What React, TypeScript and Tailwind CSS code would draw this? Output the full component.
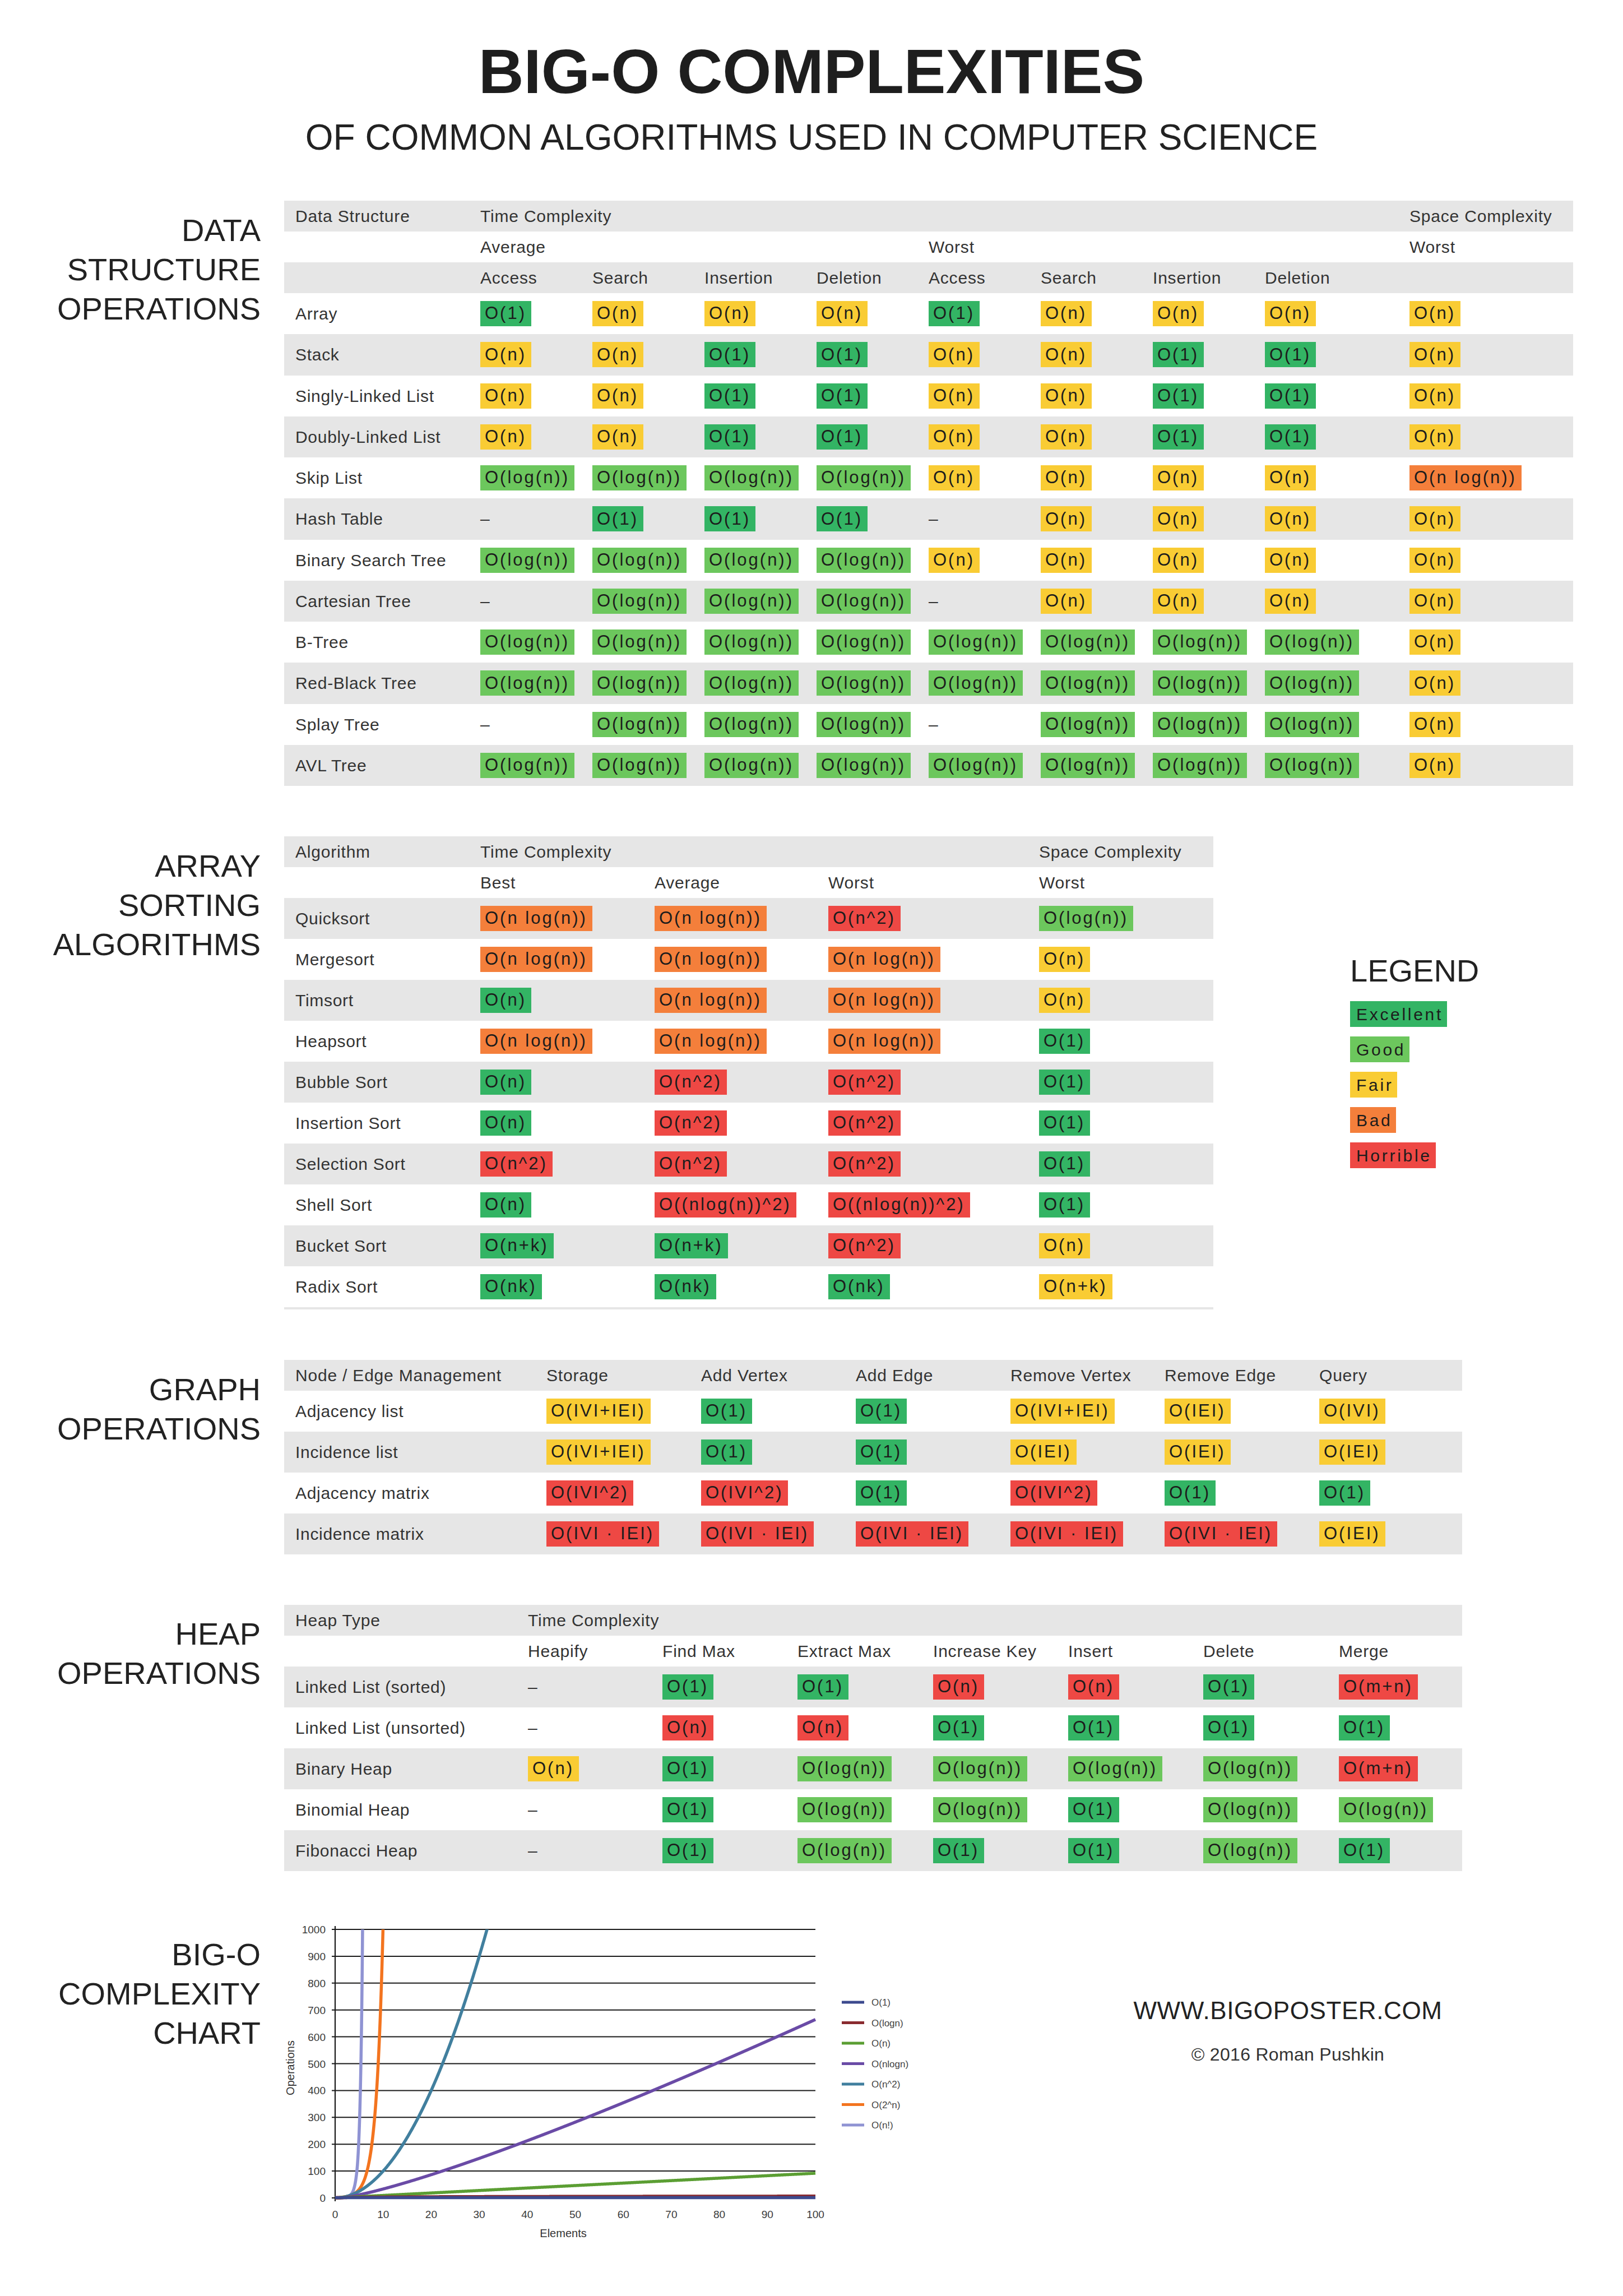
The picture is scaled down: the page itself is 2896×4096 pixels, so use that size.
import React from 'react';

type Level = 'E' | 'G' | 'F' | 'B' | 'H';
type Cell = [string, Level] | null;

const BG: Record<Level, string> = {
  E: 'bg-[#33b464]',
  G: 'bg-[#6cc75d]',
  F: 'bg-[#f9cc34]',
  B: 'bg-[#f47f3b]',
  H: 'bg-[#ee4844]',
};

const o1: Cell = ['O(1)', 'E'];
const on: Cell = ['O(n)', 'F'];
const onE: Cell = ['O(n)', 'E'];
const onH: Cell = ['O(n)', 'H'];
const lg: Cell = ['O(log(n))', 'G'];
const nl: Cell = ['O(n log(n))', 'B'];
const n2: Cell = ['O(n^2)', 'H'];
const mn: Cell = ['O(m+n)', 'H'];

const dsRows: [string, Cell[]][] = [
  ['Array', [o1, on, on, on, o1, on, on, on, on]],
  ['Stack', [on, on, o1, o1, on, on, o1, o1, on]],
  ['Singly-Linked List', [on, on, o1, o1, on, on, o1, o1, on]],
  ['Doubly-Linked List', [on, on, o1, o1, on, on, o1, o1, on]],
  ['Skip List', [lg, lg, lg, lg, on, on, on, on, nl]],
  ['Hash Table', [null, o1, o1, o1, null, on, on, on, on]],
  ['Binary Search Tree', [lg, lg, lg, lg, on, on, on, on, on]],
  ['Cartesian Tree', [null, lg, lg, lg, null, on, on, on, on]],
  ['B-Tree', [lg, lg, lg, lg, lg, lg, lg, lg, on]],
  ['Red-Black Tree', [lg, lg, lg, lg, lg, lg, lg, lg, on]],
  ['Splay Tree', [null, lg, lg, lg, null, lg, lg, lg, on]],
  ['AVL Tree', [lg, lg, lg, lg, lg, lg, lg, lg, on]],
];

const shell: Cell = ['O((nlog(n))^2)', 'H'];
const nk: Cell = ['O(nk)', 'E'];
const sortRows: [string, Cell[]][] = [
  ['Quicksort', [nl, nl, n2, lg]],
  ['Mergesort', [nl, nl, nl, on]],
  ['Timsort', [onE, nl, nl, on]],
  ['Heapsort', [nl, nl, nl, o1]],
  ['Bubble Sort', [onE, n2, n2, o1]],
  ['Insertion Sort', [onE, n2, n2, o1]],
  ['Selection Sort', [n2, n2, n2, o1]],
  ['Shell Sort', [onE, shell, shell, o1]],
  ['Bucket Sort', [['O(n+k)', 'E'], ['O(n+k)', 'E'], n2, on]],
  ['Radix Sort', [nk, nk, nk, ['O(n+k)', 'F']]],
];

const vpe: Cell = ['O(IVI+IEI)', 'F'];
const oe: Cell = ['O(IEI)', 'F'];
const ov: Cell = ['O(IVI)', 'F'];
const v2: Cell = ['O(IVI^2)', 'H'];
const ve: Cell = ['O(IVI · IEI)', 'H'];
const graphRows: [string, Cell[]][] = [
  ['Adjacency list', [vpe, o1, o1, vpe, oe, ov]],
  ['Incidence list', [vpe, o1, o1, oe, oe, oe]],
  ['Adjacency matrix', [v2, v2, o1, v2, o1, o1]],
  ['Incidence matrix', [ve, ve, ve, ve, ve, oe]],
];

const heapRows: [string, Cell[]][] = [
  ['Linked List (sorted)', [null, o1, o1, onH, onH, o1, mn]],
  ['Linked List (unsorted)', [null, onH, onH, o1, o1, o1, o1]],
  ['Binary Heap', [on, o1, lg, lg, lg, lg, mn]],
  ['Binomial Heap', [null, o1, lg, lg, o1, lg, lg]],
  ['Fibonacci Heap', [null, o1, lg, o1, o1, lg, o1]],
];

const DS_COLS = 'grid-cols-[350px_200px_200px_200px_200px_200px_200px_200px_258px_292px]';
const SORT_COLS = 'grid-cols-[350px_311px_310px_376px_311px]';
const GRAPH_COLS = 'grid-cols-[468px_276px_276px_276px_275px_276px_255px]';
const HEAP_COLS = 'grid-cols-[435px_240px_241px_242px_241px_241px_242px_220px]';

const GRAY = 'bg-[#e6e6e6]';

function Badge({ cell }: { cell: Cell }) {
  if (!cell) return <span className="text-[30px] text-[#333]">–</span>;
  const [v, l] = cell;
  return (
    <span
      className={`inline-flex h-[45px] items-center whitespace-nowrap pl-[8px] pr-[9px] text-[31px] tracking-[3px] text-[#1c1c1c] ${BG[l]}`}
    >
      {v}
    </span>
  );
}

function HeadRow({ cols, gray, items }: { cols: string; gray?: boolean; items: string[] }) {
  return (
    <div className={`grid h-[55px] items-center ${cols} ${gray ? GRAY : ''}`}>
      {items.map((t, i) => (
        <div key={i} className={`whitespace-nowrap text-[30px] tracking-[0.8px] text-[#333] ${i === 0 ? 'pl-[20px]' : ''}`}>
          {t}
        </div>
      ))}
    </div>
  );
}

function DataRow({ cols, gray, name, cells, h }: { cols: string; gray: boolean; name: string; cells: Cell[]; h: string }) {
  return (
    <div className={`grid items-center ${h} ${cols} ${gray ? GRAY : ''}`}>
      <div className="whitespace-nowrap pl-[20px] text-[30px] tracking-[0.7px] text-[#333]">{name}</div>
      {cells.map((c, i) => (
        <div key={i}>
          <Badge cell={c} />
        </div>
      ))}
    </div>
  );
}

function SectionLabel({ lines, pt }: { lines: string[]; pt: string }) {
  return (
    <div className={`text-right text-[56px] leading-[70px] text-[#222] ${pt}`}>
      {lines.map((l) => (
        <div key={l}>{l}</div>
      ))}
    </div>
  );
}

const legend: [string, Level][] = [
  ['Excellent', 'E'],
  ['Good', 'G'],
  ['Fair', 'F'],
  ['Bad', 'B'],
  ['Horrible', 'H'],
];

// chart geometry, in page pixels shifted to the svg origin
const OX = 507;
const OY = 3420;
const px = (x: number) => 598 - OX + 8.57 * x;
const py = (v: number) => 3921 - OY - 0.479 * v;
const logFact = [0, 0, Math.log(2), Math.log(6), Math.log(24), Math.log(120), Math.log(720), Math.log(5040), Math.log(40320)];
const fact = (x: number) => {
  const s = x * 1.08;
  const i = Math.min(Math.floor(s), 7);
  const t = s - i;
  return Math.exp(logFact[i] + (logFact[i + 1] - logFact[i]) * t);
};

function curve(f: (x: number) => number) {
  const pts: string[] = [];
  for (let i = 0; i <= 2000; i++) {
    const x = i * 0.05;
    const v = f(x);
    pts.push(`${px(x).toFixed(2)},${py(Math.min(v, 1100)).toFixed(2)}`);
    if (v > 1100) break;
  }
  return 'M' + pts.join('L');
}

const series = [
  { label: 'O(1)', color: '#3c4a8e', f: () => 1 },
  { label: 'O(logn)', color: '#8a2b2f', f: (x: number) => (x < 1 ? 0 : Math.log2(x)) },
  { label: 'O(n)', color: '#5b9e33', f: (x: number) => 0.92 * x },
  { label: 'O(nlogn)', color: '#6a4ba6', f: (x: number) => (x < 1 ? 0 : x * Math.log2(x)) },
  { label: 'O(n^2)', color: '#417f9e', f: (x: number) => x * x },
  { label: 'O(2^n)', color: '#f3741f', f: (x: number) => Math.pow(2, x) },
  { label: 'O(n!)', color: '#8f93d3', f: fact },
];

const FONT = 'Liberation Sans, Arial, sans-serif';

function Chart() {
  const grid = [100, 200, 300, 400, 500, 600, 700, 800, 900, 1000];
  const ys = [0, ...grid];
  const xs = [0, 10, 20, 30, 40, 50, 60, 70, 80, 90, 100];
  return (
    <svg width={1130} height={600} viewBox="0 0 1130 600" className="shrink-0">
      <defs>
        <clipPath id="plot">
          <rect x={0} y={py(1000)} width={1000} height={560} />
        </clipPath>
      </defs>
      {grid.map((v) => (
        <line key={v} x1={px(0) - 6} x2={px(100)} y1={py(v)} y2={py(v)} stroke="#1a1a1a" strokeWidth={2} />
      ))}
      <line x1={px(0)} x2={px(0)} y1={py(1000) - 6} y2={py(0) + 6} stroke="#1a1a1a" strokeWidth={2.2} />
      <line x1={px(0) - 6} x2={px(100)} y1={py(0)} y2={py(0)} stroke="#1a1a1a" strokeWidth={2.2} />
      {ys.map((v) => (
        <text key={v} x={74} y={py(v) + 7} textAnchor="end" fontSize={19} fill="#3a3a3a" fontFamily={FONT}>
          {v}
        </text>
      ))}
      {xs.map((x) => (
        <text key={x} x={px(x)} y={537} textAnchor="middle" fontSize={19} fill="#3a3a3a" fontFamily={FONT}>
          {x}
        </text>
      ))}
      <text x={498} y={571} textAnchor="middle" fontSize={20} fill="#333" fontFamily={FONT}>
        Elements
      </text>
      <text transform="translate(18,269) rotate(-90)" textAnchor="middle" fontSize={20} fill="#333" fontFamily={FONT}>
        Operations
      </text>
      <g clipPath="url(#plot)" fill="none" strokeWidth={5.5} strokeLinejoin="round">
        {[...series].reverse().map((s) => (
          <path key={s.label} d={curve(s.f)} stroke={s.color} />
        ))}
      </g>
      {series.map((s, i) => (
        <g key={s.label}>
          <line x1={995} x2={1035} y1={152 + 36.5 * i} y2={152 + 36.5 * i} stroke={s.color} strokeWidth={5} />
          <text x={1048} y={158 + 36.5 * i} fontSize={17} fill="#444" fontFamily={FONT}>
            {s.label}
          </text>
        </g>
      ))}
    </svg>
  );
}

export default function App() {
  return (
    <div className="min-h-[4096px] w-[2896px] bg-white pt-[72px] font-['Liberation_Sans',Arial,sans-serif] text-[#222]">
      <h1 className="text-center text-[112px] font-bold leading-none text-[#1e1e1e]">BIG-O COMPLEXITIES</h1>
      <p className="mt-[29px] text-center text-[64px] leading-none text-[#222]">OF COMMON ALGORITHMS USED IN COMPUTER SCIENCE</p>

      {/* data structures */}
      <section className="mt-[81px] grid grid-cols-[465px_1fr] gap-x-[42px]">
        <SectionLabel lines={['DATA', 'STRUCTURE', 'OPERATIONS']} pt="pt-[18px]" />
        <div className="w-[2300px]">
          <HeadRow
            cols={DS_COLS}
            gray
            items={['Data Structure', 'Time Complexity', '', '', '', '', '', '', '', 'Space Complexity']}
          />
          <HeadRow cols={DS_COLS} items={['', 'Average', '', '', '', 'Worst', '', '', '', 'Worst']} />
          <HeadRow
            cols={DS_COLS}
            gray
            items={['', 'Access', 'Search', 'Insertion', 'Deletion', 'Access', 'Search', 'Insertion', 'Deletion', '']}
          />
          {dsRows.map(([name, cells], i) => (
            <DataRow key={name} cols={DS_COLS} gray={i % 2 === 1} name={name} cells={cells} h="h-[73.25px]" />
          ))}
        </div>
      </section>

      {/* sorting */}
      <section className="mt-[90px] grid grid-cols-[465px_1fr] gap-x-[42px]">
        <SectionLabel lines={['ARRAY', 'SORTING', 'ALGORITHMS']} pt="pt-[18px]" />
        <div className="flex items-start">
          <div className="w-[1658px] border-b-4 border-[#e6e6e6]">
            <HeadRow cols={SORT_COLS} gray items={['Algorithm', 'Time Complexity', '', '', 'Space Complexity']} />
            <HeadRow cols={SORT_COLS} items={['', 'Best', 'Average', 'Worst', 'Worst']} />
            {sortRows.map(([name, cells], i) => (
              <DataRow key={name} cols={SORT_COLS} gray={i % 2 === 0} name={name} cells={cells} h="h-[73px]" />
            ))}
          </div>
          <div className="ml-[244px] mt-[212px]">
            <div className="text-[56px] leading-none text-[#222]">LEGEND</div>
            <div className="mt-[26px] flex flex-col items-start gap-[17px]">
              {legend.map(([t, l]) => (
                <span
                  key={t}
                  className={`inline-flex h-[46px] items-center pl-[11px] pr-[7px] text-[30px] tracking-[3.7px] text-[#1c1c1c] ${BG[l]}`}
                >
                  {t}
                </span>
              ))}
            </div>
          </div>
        </div>
      </section>

      {/* graph */}
      <section className="mt-[90px] grid grid-cols-[465px_1fr] gap-x-[42px]">
        <SectionLabel lines={['GRAPH', 'OPERATIONS']} pt="pt-[18px]" />
        <div className="w-[2102px]">
          <HeadRow
            cols={GRAPH_COLS}
            gray
            items={['Node / Edge Management', 'Storage', 'Add Vertex', 'Add Edge', 'Remove Vertex', 'Remove Edge', 'Query']}
          />
          {graphRows.map(([name, cells], i) => (
            <DataRow key={name} cols={GRAPH_COLS} gray={i % 2 === 1} name={name} cells={cells} h="h-[73px]" />
          ))}
        </div>
      </section>

      {/* heap */}
      <section className="mt-[90px] grid grid-cols-[465px_1fr] gap-x-[42px]">
        <SectionLabel lines={['HEAP', 'OPERATIONS']} pt="pt-[17px]" />
        <div className="w-[2102px]">
          <HeadRow cols={HEAP_COLS} gray items={['Heap Type', 'Time Complexity', '', '', '', '', '', '']} />
          <HeadRow
            cols={HEAP_COLS}
            items={['', 'Heapify', 'Find Max', 'Extract Max', 'Increase Key', 'Insert', 'Delete', 'Merge']}
          />
          {heapRows.map(([name, cells], i) => (
            <DataRow key={name} cols={HEAP_COLS} gray={i % 2 === 0} name={name} cells={cells} h="h-[73px]" />
          ))}
        </div>
      </section>

      {/* chart */}
      <section className="mt-[82px] grid grid-cols-[465px_1fr] gap-x-[42px] pb-[76px]">
        <SectionLabel lines={['BIG-O', 'COMPLEXITY', 'CHART']} pt="pt-[32px]" />
        <div className="flex items-start">
          <Chart />
          <div className="ml-[311px] w-[700px] pt-[145px] text-center">
            <div className="text-[44px] leading-none tracking-[0.6px] text-[#222]">WWW.BIGOPOSTER.COM</div>
            <div className="mt-[40px] text-[32px] leading-none tracking-[0.3px] text-[#333]">© 2016 Roman Pushkin</div>
          </div>
        </div>
      </section>
    </div>
  );
}
